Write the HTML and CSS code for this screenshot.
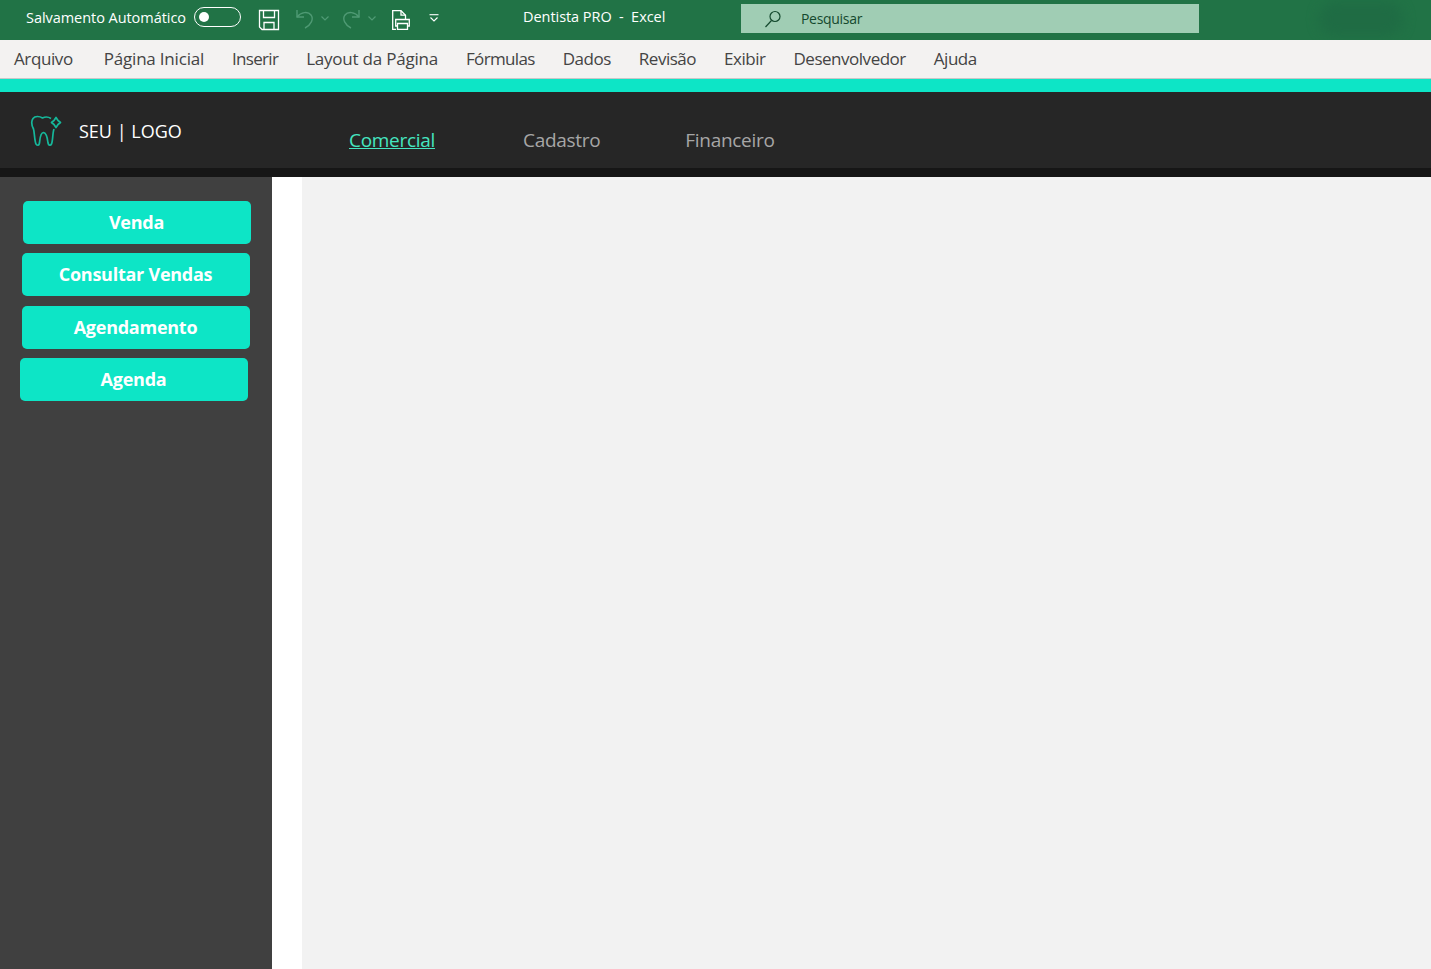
FILE: index.html
```html
<!DOCTYPE html>
<html lang="pt-BR">
<head>
    <meta charset="UTF-8">
    <meta name="viewport" content="width=device-width, initial-scale=1.0">
    <title>Dentista PRO - Excel</title>
    <link rel="stylesheet" href="styles.css">
</head>
<body>
    <div class="titlebar">
        <span class="autosave">Salvamento Automático</span>
        <span class="toggle"><span class="toggle-dot"></span></span>
        <svg class="qa-icon qa-save" width="22" height="22" viewBox="0 0 22 22" fill="none" stroke="#fff" stroke-width="1.3">
            <path d="M1.5 1.5H20.5V20.5H4L1.5 18Z"/>
            <path d="M5.5 1.5V8.5H16.5V1.5"/>
            <path d="M6 20.5V13.5H16V20.5"/>
        </svg>
        <svg class="qa-icon qa-undo" width="20" height="22" viewBox="0 0 20 22" fill="none" stroke="#4f9a74" stroke-width="1.4">
            <path d="M2 2V9H9"/>
            <path d="M2 9C6 4 13 3 16 7C19 11 16 17 10 20"/>
        </svg>
        <svg class="qa-caret qa-caret-undo" width="8" height="5" viewBox="0 0 8 5" fill="none" stroke="#4f9a74" stroke-width="1.2"><path d="M.5 .5L4 4L7.5 .5"/></svg>
        <svg class="qa-icon qa-redo" width="20" height="22" viewBox="0 0 20 22" fill="none" stroke="#4f9a74" stroke-width="1.4">
            <path d="M18 2V9H11"/>
            <path d="M18 9C14 4 7 3 4 7C1 11 4 17 10 20"/>
        </svg>
        <svg class="qa-caret qa-caret-redo" width="8" height="5" viewBox="0 0 8 5" fill="none" stroke="#4f9a74" stroke-width="1.2"><path d="M.5 .5L4 4L7.5 .5"/></svg>
        <svg class="qa-icon qa-print" width="18" height="20" viewBox="0 0 18 20" fill="none" stroke="#fff" stroke-width="1.3">
            <path d="M4 19.4H.7V.7H9L13.5 5.2V9"/>
            <path d="M9 .7V5.2H13.5"/>
            <path d="M5.5 16H3.7V9.5H17.3V16H15.5"/>
            <path d="M5.5 13.5H15.5V19.3H5.5Z"/>
        </svg>
        <svg class="qa-customize" width="10" height="9" viewBox="0 0 10 9" fill="none" stroke="#fff" stroke-width="1.1">
            <path d="M.5 .7H9.5"/>
            <path d="M1.5 3.5L5 7L8.5 3.5"/>
        </svg>
        <span class="doc-title">Dentista PRO &nbsp;-&nbsp; Excel</span>
        <div class="search">
            <svg width="18" height="18" viewBox="0 0 18 18" fill="none" stroke="#14492e" stroke-width="1.2">
                <circle cx="11" cy="6.5" r="5"/>
                <path d="M7.5 10.5L1.5 17"/>
            </svg>
            <span>Pesquisar</span>
        </div>
        <div class="title-shade"></div>
    </div>

    <div class="menubar">
        <span class="menu-arquivo">Arquivo</span>
        <span class="menu-inicial">Página Inicial</span>
        <span class="menu-inserir">Inserir</span>
        <span class="menu-layout">Layout da Página</span>
        <span class="menu-formulas">Fórmulas</span>
        <span>Dados</span>
        <span>Revisão</span>
        <span>Exibir</span>
        <span>Desenvolvedor</span>
        <span>Ajuda</span>
    </div>

    <div class="teal-strip"></div>

    <div class="app-header">
        <div class="logo">
            <svg width="32" height="34" viewBox="0 0 32 34" fill="none" stroke="#16b79a" stroke-width="1.7" stroke-linejoin="round">
                <path d="M21 5.5C18 3.5 15.5 3.5 12.5 5C9.5 3 5 2.8 3 5.5C.5 9 2 13 3.5 16C4.5 19 4.5 28 6 31C7.5 33 9 32.5 9.5 30C10 26 10 20 13.5 19.5C17 20 17.5 26 18 30C18.5 32.5 20.5 33 21.5 31C23 27.5 22.5 20 24 16"/>
                <path d="M26 4.5L28 7.5L30.5 9.5L28 11.5L26 14.5L24 11.5L21.5 9.5L24 7.5Z"/>
            </svg>
            <span class="logo-text">SEU | LOGO</span>
        </div>
        <nav class="tabs">
            <a class="tab tab-active">Comercial</a>
            <a class="tab">Cadastro</a>
            <a class="tab tab-last">Financeiro</a>
        </nav>
    </div>
    <div class="dark-strip"></div>

    <div class="content">
        <aside class="sidebar">
            <button class="side-btn btn-venda">Venda</button>
            <button class="side-btn btn-consultar">Consultar Vendas</button>
            <button class="side-btn btn-agendamento">Agendamento</button>
            <button class="side-btn btn-agenda">Agenda</button>
        </aside>
        <div class="gutter"></div>
        <main class="canvas"></main>
    </div>
</body>
</html>
```

FILE: styles.css
```css
html, body {
    margin: 0;
    height: 100%;
}
body {
    font-family: "Open Sans", "Noto Sans", sans-serif;
    display: flex;
    flex-direction: column;
    height: 969px;
    overflow: hidden;
    background: #f2f2f2;
}

/* barra de titulo do excel */
.titlebar {
    height: 40px;
    flex: none;
    background: #217346;
    color: white;
    display: flex;
    align-items: center;
    padding-left: 26px;
    position: relative;
    overflow: hidden;
}
.autosave {
    font-size: 14.5px;
    letter-spacing: -0.05px;
    width: 168px;
    white-space: nowrap;
    margin-top: -6px;
}
.toggle {
    width: 47px;
    height: 20px;
    box-sizing: border-box;
    border: 1px solid white;
    border-radius: 10px;
    display: flex;
    align-items: center;
    padding-left: 4px;
    margin-top: -6px;
}
.toggle-dot {
    width: 10px;
    height: 10px;
    border-radius: 50%;
    background: white;
}
.qa-icon, .qa-caret, .qa-customize {
    flex: none;
}
.qa-save { margin-left: 17px; }
.qa-undo { margin-left: 15px; margin-top: -3px; }
.qa-caret-undo { margin-left: 6px; margin-top: -3px; }
.qa-redo { margin-left: 12px; margin-top: -3px; }
.qa-caret-redo { margin-left: 7px; margin-top: -3px; }
.qa-print { margin-left: 16px; }
.qa-customize { margin-left: 19px; margin-top: -4px; }
.doc-title {
    font-size: 14.5px;
    letter-spacing: -0.05px;
    margin-left: 84px;
    width: 218px;
    white-space: nowrap;
    margin-top: -7px;
}
.search {
    width: 458px;
    height: 29px;
    background: #a0cdb4;
    color: #14492e;
    font-size: 14px;
    letter-spacing: -0.3px;
    display: flex;
    align-items: center;
    gap: 19px;
    padding-left: 23px;
    box-sizing: border-box;
    margin-top: -3px;
}
.title-shade {
    position: absolute;
    right: 28px;
    top: 2px;
    width: 84px;
    height: 34px;
    border-radius: 40px;
    background: #1f6c44;
    filter: blur(6px);
}

/* menu */
.menubar {
    height: 38px;
    flex: none;
    background: #f3f2f1;
    border-bottom: 1px solid #c8c8c8;
    display: flex;
    align-items: center;
    gap: 28px;
    padding-left: 14px;
    font-size: 17px;
    letter-spacing: -0.48px;
    color: #444;
}
.menubar span {
    margin-top: -2px;
}
.menu-arquivo { margin-right: 3px; letter-spacing: -0.4px; }
.menu-inicial { letter-spacing: -0.2px; }
.menu-inserir { letter-spacing: -0.7px; }
.menu-layout { letter-spacing: -0.22px; }
.menu-formulas { letter-spacing: -0.65px; }

.teal-strip {
    height: 13px;
    flex: none;
    background: #0de5c6;
}

/* cabecalho do app */
.app-header {
    height: 76px;
    flex: none;
    background: #262626;
    display: flex;
}
.logo {
    width: 349px;
    flex: none;
    display: flex;
    align-items: center;
    gap: 17px;
    padding-left: 30px;
    box-sizing: border-box;
    margin-top: -1px;
}
.logo svg {
    flex: none;
}
.logo-text {
    color: white;
    font-size: 18px;
    letter-spacing: 0;
    margin-top: 2px;
}
.tabs {
    display: flex;
    gap: 88px;
    padding-top: 35px;
    font-size: 19px;
    letter-spacing: -0.3px;
}
.tab {
    color: #a6a6a6;
}
.tab-last {
    margin-left: -3px;
}
.tab-active {
    color: #45e6c0;
    text-decoration: underline;
}
.dark-strip {
    height: 9px;
    flex: none;
    background: #161616;
}

/* area principal */
.content {
    flex: 1;
    display: flex;
    min-height: 0;
}
.sidebar {
    width: 272px;
    flex: none;
    background: #404040;
    display: flex;
    flex-direction: column;
    align-items: flex-start;
    padding-top: 24px;
    box-sizing: border-box;
}
.side-btn {
    width: 228px;
    height: 43px;
    flex: none;
    background: #0de5c6;
    color: white;
    border: none;
    border-radius: 5px;
    font-family: inherit;
    font-size: 18px;
    font-weight: 700;
    letter-spacing: -0.25px;
    padding: 0 1px 2px 0;
}
.btn-venda { margin-left: 23px; }
.btn-consultar { margin-left: 22px; margin-top: 9px; }
.btn-agendamento { margin-left: 22px; margin-top: 10px; }
.btn-agenda { margin-left: 20px; margin-top: 9px; }
.gutter {
    width: 30px;
    flex: none;
    background: white;
}
.canvas {
    flex: 1;
    background: #f2f2f2;
}
```
